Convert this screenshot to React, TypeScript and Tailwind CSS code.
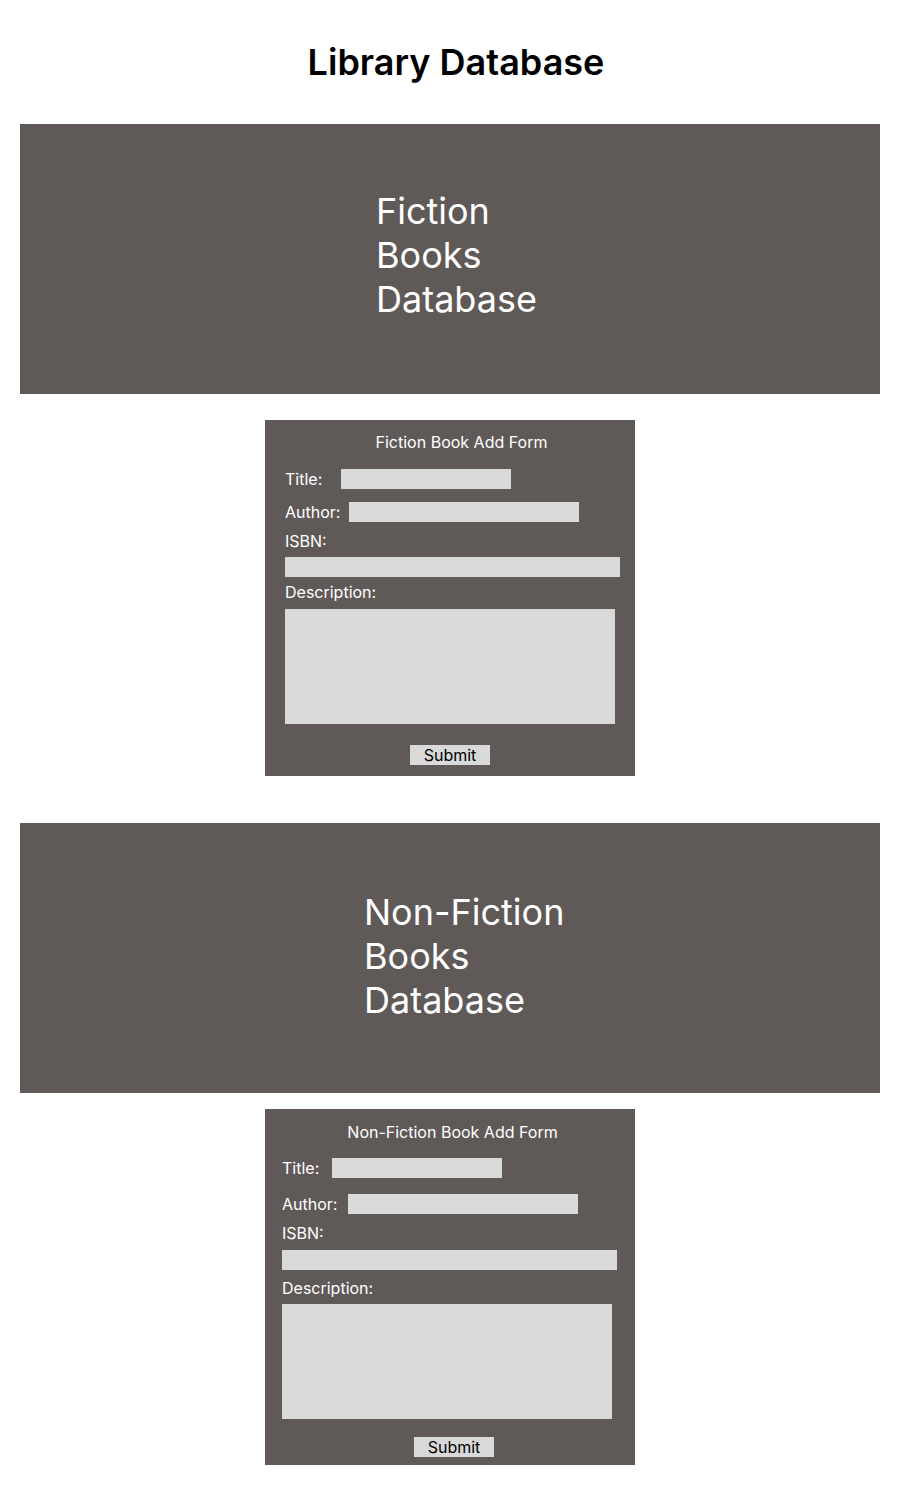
import React from "react";

function Banner({ words, ml, pt, w }: { words: string; ml: string; pt: string; w: string }) {
  return (
    <div className={`mx-[20px] h-[270px] bg-[#5f5958] ${pt}`}>
      <div className={`${ml} ${w} text-[36px] leading-[44px] text-white font-normal`}>{words}</div>
    </div>
  );
}

export default function App() {
  return (
    <div className="w-[900px] bg-white font-['Inter',sans-serif] pb-[35px]">
      <h1 className="pt-[40px] pl-[12px] text-center text-[36px] leading-[44px] font-semibold text-black">
        Library Database
      </h1>

      <div className="mt-[40px]">
        <Banner words="Fiction Books Database" ml="ml-[356px]" pt="pt-[65px]" w="w-[180px]" />
      </div>

      {/* Fiction form */}
      <div className="mt-[26px] ml-[265px] w-[370px] bg-[#5f5958] pt-[12px] pb-[11px] text-white text-[16px] leading-[20px]">
        <div className="pl-[23px] text-center whitespace-nowrap">Fiction Book Add Form</div>
        <div className="pl-[20px]">
          <div className="mt-[17px] flex items-center">
            <span className="w-[56px]">Title:</span>
            <div className="h-[20px] w-[170px] bg-[#d9d9d9]" />
          </div>
          <div className="mt-[13px] flex items-center">
            <span className="w-[64px]">Author:</span>
            <div className="h-[20px] w-[230px] bg-[#d9d9d9]" />
          </div>
          <div className="mt-[9px]">ISBN:</div>
          <div className="mt-[6px] h-[20px] w-[335px] bg-[#d9d9d9]" />
          <div className="mt-[5px]">Description:</div>
          <div className="mt-[7px] h-[115px] w-[330px] bg-[#d9d9d9]" />
        </div>
        <div className="mt-[21px] ml-[145px] h-[20px] w-[80px] bg-[#d9d9d9] text-black text-center leading-[20px]">
          Submit
        </div>
      </div>

      <div className="mt-[47px]">
        <Banner words="Non-Fiction Books Database" ml="ml-[344px]" pt="pt-[67px]" w="w-[220px]" />
      </div>

      {/* Non-fiction form */}
      <div className="mt-[16px] ml-[265px] w-[370px] bg-[#5f5958] pt-[13px] pb-[8px] text-white text-[16px] leading-[20px]">
        <div className="pl-[5px] text-center whitespace-nowrap">Non-Fiction Book Add Form</div>
        <div className="pl-[17px]">
          <div className="mt-[16px] flex items-center">
            <span className="w-[50px]">Title:</span>
            <div className="h-[20px] w-[170px] bg-[#d9d9d9]" />
          </div>
          <div className="mt-[16px] flex items-center">
            <span className="w-[66px]">Author:</span>
            <div className="h-[20px] w-[230px] bg-[#d9d9d9]" />
          </div>
          <div className="mt-[9px]">ISBN:</div>
          <div className="mt-[7px] h-[20px] w-[335px] bg-[#d9d9d9]" />
          <div className="mt-[8px]">Description:</div>
          <div className="mt-[6px] h-[115px] w-[330px] bg-[#d9d9d9]" />
        </div>
        <div className="mt-[18px] ml-[149px] h-[20px] w-[80px] bg-[#d9d9d9] text-black text-center leading-[20px]">
          Submit
        </div>
      </div>
    </div>
  );
}
